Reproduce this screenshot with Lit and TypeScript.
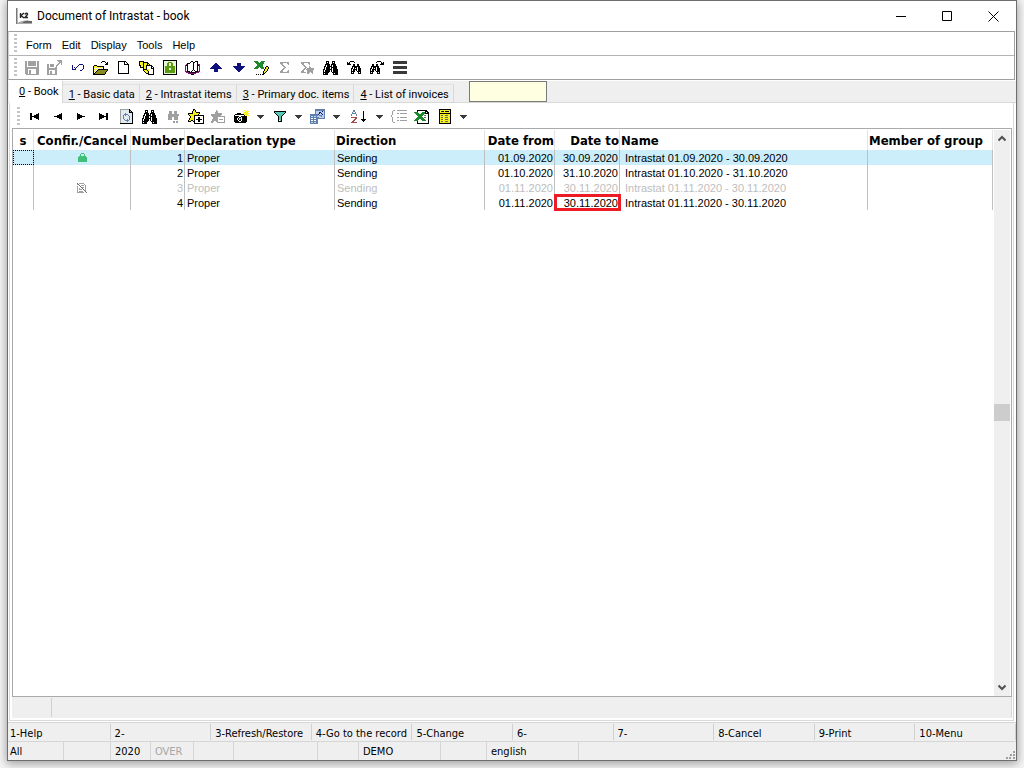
import { LitElement, html, svg, css, nothing } from "lit";
import { customElement, property } from "lit/decorators.js";
import { classMap } from "lit/directives/class-map.js";

const PALETTE: Record<string, string> = {
  k: "#000000", w: "#ffffff", g: "#a0a0a0", d: "#6a6a6a", y: "#f8f01c", o: "#8a8a1c",
  n: "#10107c", b: "#5f7fae", l: "#bcd0e8", G: "#5a9a10", L: "#e8f6d8", p: "#8a0f82",
  e: "#1c8a2c", r: "#a84848", t: "#58c8b8", s: "#e2ebf0", m: "#3fbf78", c: "#3a3a3a",
};

const BITMAPS: Record<string, string[]> = {
  save: [
    "ggwggggggggwgg", "ggwggggggggwgg", "ggwggggggggwgg", "ggwggggggggwgg", "ggwggggggggwgg",
    "ggwwwwwwwwwwgg", "gggggggggggggg", "gggggggggggggg", "gggwwwwwwwwggg", "gggwggwwwwwggg",
    "gggwggwwwwwggg", "gggwggwwwwwggg", "gggwggwwwwwggg", ".ggggggggggggg",
  ],
  saveAs: [
    "..........ggggg", "...........gggg", "............ggg", "...........gg.g", "ggwggggww.gg..g",
    "ggwggggwwgg....", "ggwggggwwg.....", "ggwwwwwwgg.....", "gggggggggg.....", "gggggggggg.....",
    "ggwwwwwwgg.....", "ggwggwwwgg.....", "ggwggwwwgg.....", "ggwggwwwgg.....", "gggggggggg.....",
  ],
  undo: [
    ".......nnnn.", "n.....n....n", "n....n.....n", "n.n.n......n", "n..n.......n",
    "nnnn......n.", "........nn..",
  ],
  open: [
    ".........kkk...", "........k...k.k", ".............kk", "............kkk", ".kkk...........",
    "kyyykkkkkkk....", "kywywywywyk....", "kwywywywywk....", "kywywkkkkkkkkkk", "kwywkoooooooook",
    "kywkoooooooook.", "kwkoooooooook..", "kkooooooooook..", "kkkkkkkkkkkk...",
  ],
  page: [
    "kkkkkkkk...", "kwwwwwkwk..", "kwwwwwkwwk.", "kwwwwwkkkkk", "kwwwwwwwwwk", "kwwwwwwwwwk",
    "kwwwwwwwwwk", "kwwwwwwwwwk", "kwwwwwwwwwk", "kwwwwwwwwwk", "kwwwwwwwwwk", "kwwwwwwwwwk", "kkkkkkkkkkk",
  ],
  pages: [
    "kkkkk..........", "kyyykkkkk......", "kyyykyyykk.....", "kyyykyyykyk....", "kkyykyykkkkkk..",
    ".kyykyykwwwwkk.", ".kkkkyykwwwwkwk", "....kyykwwwwkkk", "....kkkkyywwwwk", "....kyyykywwwwk",
    ".....kyyykwwwwk", "......kyykwwwwk", ".......kkkwwwwk", ".........kkkkkk",
  ],
  lock: [
    "kkkkkkkkkkkkkk", "kLLLLLLLLLLLLk", "kLLLLGGGGLLLLk", "kLLLGGLLGGLLLk", "kLLLGGLLGGLLLk", "kLLLGGLLGGLLLk",
    "kLGGGGGGGGGGLk", "kLGGGGGGGGGGLk", "kLGGGGLLGGGGLk", "kLGGGGLLGGGGLk", "kLGGGGGGGGGGLk", "kLGGGGGGGGGGLk",
    "kLGGGGGGGGGGLk", "kLLLLLLLLLLLLk", "kkkkkkkkkkkkkk",
  ],
  book: [
    "......kk..kkk..", ".....kwwkkwwk..", "..kkkwwwkwwwk..", ".pkwwwwwkwwwkpp", "pkkwwwwwkwwwkkp",
    "p.kwwwwwkwwwk.p", "p.kwwwwwkwwwk.p", "p.kwwwwwkwwwk.p", "p.kwwwwwkwwwk.p", "p.kwwwwkwkwwk.p",
    "ppkkkwkwwwkkkpp", ".pppkkkkkkkppp.", "...pppppppp....", "......kkk......",
  ],
  up: [".....nn.....", "....nnnn....", "...nnnnnn...", "..nnnnnnnn..", ".nnnnnnnnnn.", "nnnnnnnnnnnn", "....nnnn....", "....nnnn....", "....nnnn...."],
  down: ["....nnnn....", "....nnnn....", "....nnnn....", "nnnnnnnnnnnn", ".nnnnnnnnnn.", "..nnnnnnnn..", "...nnnnnn...", "....nnnn....", ".....nn....."],
  excelEdit: [
    "eeee...eeee.....", ".eeee.eeee......", "..eeeeeeee......", "...eeeeee.......", "...eeeeee.......",
    "..eeeeeee...kk..", ".eeee.eeee.kyyk.", "eeee...eee.kyyk.", "..........kyyk..", "..........kyyk..",
    ".........kyyk...", ".........kyk....", ".........kk.....", "..k.k.k.kk......",
  ],
  sigma: ["ggggggggg", "ggg....gg", ".gg.....g", "..gg.....", "...gg....", "....gg...", "...gg....", "..gg.....", ".gg.....g", "ggg....gg", "ggggggggg"],
  sigmaStar: [
    "ggggggggg....", "ggg....gg....", ".gg.....g....", "..gg.........", "...gg...g....", "....gg..gg...",
    "...gg.ggggggg", "..gg.gggggggg", ".gg...gggggg.", "ggg...gggggg.", "ggggg.ggg.gg.", "......gg...g.",
  ],
  find: [
    "...kkk...kkk...", "...kwk...kwk...", "...kkk...kkk...", "..kkkkk.kkkkk..", "..kwkkk.kwkkk..",
    ".kkwkkkkkwkkkk.", ".kwkkkkwkkkkkk.", ".kwkkkkwkwkkkk.", "kkwkkkkkkwkkkkk", "kwkkkkkwkwkkkkk",
    "kwkkkkk.kwkkkkk", "kkkkkk...kkkkkk", "kwkkk.....kwkkk", "kkkkk.....kkkkk",
  ],
  findPrev: [
    "...kkkk.......", "k.k....k......", "kkk...........", "kkkk..kk..kk..", "......kk..kk..", ".....kkkkkkkk.",
    ".....kwkkkwkk.", "....kkwkwkwkkk", "....kwkkkkwkkk", "....kwkkwkwkkk", "....kkkk..kkkk", "....kwk....kwk", "....kkk....kkk",
  ],
  findNext: [
    ".......kkkk...", "......k....k.k", "...........kkk", "..kk..kk..kkkk", "..kk..kk......", ".kkkkkkkk.....",
    ".kwkkkwkk.....", "kkwkwkwkkk....", "kwkkkkwkkk....", "kwkkwkwkkk....", "kkkk..kkkk....", "kwk....kwk....", "kkk....kkk....",
  ],
  menu: ["cccccccccccccc", "cccccccccccccc", "cccccccccccccc", "..............", "..............", "cccccccccccccc", "cccccccccccccc", "cccccccccccccc", "..............", "..............", "cccccccccccccc", "cccccccccccccc", "cccccccccccccc"],
  first: ["kk......k", "kk....kkk", "kk..kkkkk", "kkkkkkkkk", "kk..kkkkk", "kk....kkk", "kk......k"],
  prev: [".......k", ".....kkk", "...kkkkk", "kkkkkkkk", "...kkkkk", ".....kkk", ".......k"],
  next: ["k.......", "kkk.....", "kkkkk...", "kkkkkkkk", "kkkkk...", "kkk.....", "k......."],
  last: ["k......kk", "kkk....kk", "kkkkk..kk", "kkkkkkkkk", "kkkkk..kk", "kkk....kk", "k......kk"],
  refresh: [
    "gggggggggk...", "gsssssssskk..", "gsssssssskgk.", "gsssssssskkkk", "gssssbssssssk", "gsssbbbbssssk",
    "gssbsbssbsssk", "gssbsssssbssk", "gssbsssssbssk", "gssbsssssbssk", "gsssbssbsbssk", "gssssbbbbsssk",
    "gssssssbssssk", "gsssssssssssk", "kkkkkkkkkkkkk",
  ],
  findMore: [
    "..ggg..ggg..", "..ggg..ggg..", "..ggg..ggg..", ".ggggggggggg", ".ggggggggggg", ".gggggggggg.",
    ".gggg..gggg.", ".gggg..gggg.", ".gggg..gggg.", "............", "......gg.gg.", "......gg.gg.",
  ],
  starAdd: [
    ".....kk.........", ".....kyk........", "....kyyk........", "....kyyykkkk....", "kkkkkyyyyyyk....",
    "kyyyyyyyyyk.....", ".kyyyykkkkkkkkkk", "..kyyykwwwwwwwwk", "..kyyykwwwkkwwwk", ".kyyyykwwwkkwwwk",
    ".kyyyykwkkkkkkwk", "kyykkykwwwkkwwwk", "kkk..kkwwwkkwwwk", "......kwwwwwwwwk", "......kkkkkkkkkk",
  ],
  starRemove: [
    ".....g.........", ".....gg........", "....ggg........", "....ggggggg....", "ggggggggggg....",
    "gggggggggg.....", ".ggggggggggggg.", "..gggggwwwwwwg.", "..gggggwwwwwwg.", ".ggggggwggggwg.",
    ".ggggggwwwwwwg.", "ggg..ggwwwwwwg.", "gg....gggggggg.",
  ],
  camera: [
    "..........y..y.", ".........y.yy.y", "..........yyyy.", "...kkkk..yyyyyy", ".kkkkkkkkkyyyy.", "kwwwwwwwwwkyy.y",
    "kkkkkwwkkkkkk..", "kkkkwkkwkkkkk..", "kkkwkltwkkkkk..", "kkkwklkwkkkkk..", "kkkkwkkwkkkkk..", "kkkkkwwkkkkkk..", ".kkkkkkkkkkk...",
  ],
  filter: [
    "kkkkkkkkkkkk", "kttttttttttk", ".kttttttttk.", "..kttttttk..", "...kttttk...", "....kttk....",
    "....kttk....", "....kttk....", "....kttk....", "....kwtk....", "....kkkk....",
  ],
  tables: [
    ".....bbbbbbbbbb", ".....bbbbbbbbbb", ".....bllllllnlb", ".....blllnnlllb", ".....blllnlnllb", "bbbbbbbbnlllnlb",
    "bbbbbbbblbbbllb", "bllbllbllllbllb", "bbbbbbbbblllllb", "bwwbwwbbbbbbbbb", "bbbbbbbb.......", "bwwbwwbb.......",
    "bbbbbbbb.......", "bllbllbb.......", "bbbbbbbb.......",
  ],
  sort: [
    "..bb...........", "..bb........k..", ".b..b.......k..", ".bbbb.......k..", "b....b......k..", "b....b......k..",
    "............k..", "rrrrrr......k..", "....rr......k..", "...rr.....kkkkk", "..rr.......kkk.", ".rr.........k..", "rrrrrr.........",
  ],
  tree: [
    "..gg..gggggggggg", ".g..............", ".g..............", ".g....gg.ggggggg", ".g..............", "g...............",
    "g...............", ".g....gg.ggggggg", ".g..............", ".g..............", ".g....gg.ggggggg", ".g..............", "..gg............",
  ],
  excelSheet: [
    "...kkkkkkkkkk...", "...kwwwwwwwkkk..", "eeeewwwweeekwkk.", ".eeeewweeeekkkk.", "..eeeeeeeewwwwk.", "...eeeeeewddwwk.",
    "....eeeewwwwwwk.", "...eeeeeewddwwk.", "..eeeeeeeewwwwk.", ".eeeewweeeewwwk.", "eeeewwwweeeewwk.", "...kwwwwwwwwwwk.",
    "...kwwwwwwwwwwk.", "...kkkkkkkkkkkk.",
  ],
  list: [
    "kkkkkkkkkkkk", "kyyyyyyyyyyk", "kyckkykkkkyk", "kyyyyyyyyyyk", "kkkkkkkkkkkk", "kyyyyyyyyyyk", "kyddyydddyyk",
    "kyyyyyyyyyyk", "kyddyydddyyk", "kyyyyyyyyyyk", "kyddyydddyyk", "kyyyyyyyyyyk", "kyddyydddyyk", "kyyyyyyyyyyk", "kkkkkkkkkkkk",
  ],
  drop: ["ccccccc", ".ccccc.", "..ccc..", "...c..."],
  locked: ["...mmm...", "..m...m..", "..m...m..", ".mmmmmmm.", "mmmmmmmmm", "mmmmmmmmm", "mmmmmmmmm", "mmmmmmmmm", "mmmmmmmmm"],
  cancelled: [
    "d.ggggg...", "gd.....g..", ".wd.gggwg.", "g.wd....g.", "g..wdgg.g.", "g.g.wd..g.", "g.ggg.d.g.", "g......dg.", "g.gggg.wd.", "ggggggg.wd",
  ],
  grip: [".......gg", ".......gg", ".........", "....gg.gg", "....gg.gg", ".........", "gg.gg..gg", "gg.gg..gg"],
};

/** Draws a bitmap as runs of equal pixels. */
function glyph(name: string) {
  const rows = BITMAPS[name];
  const w = Math.max(...rows.map((r) => r.length));
  const paths: Record<string, string> = {};
  rows.forEach((row, y) => {
    for (let x = 0; x < row.length; ) {
      let end = x + 1;
      while (end < row.length && row[end] === row[x]) end++;
      if (row[x] !== ".") paths[row[x]] = (paths[row[x]] ?? "") + `M${x} ${y}h${end - x}v1h${x - end}z`;
      x = end;
    }
  });
  return html`<svg width=${w} height=${rows.length} viewBox="0 0 ${w} ${rows.length}" shape-rendering="crispEdges" aria-hidden="true">
    ${Object.entries(paths).map(([c, d]) => svg`<path d=${d} fill=${PALETTE[c]}></path>`)}
  </svg>`;
}

type Tool = [icon: string, label: string];

@customElement("tool-strip")
class ToolStrip extends LitElement {
  @property({ attribute: false }) tools: Tool[] = [];
  static styles = css`
    :host { display: flex; align-items: center; height: 100%; }
    button { width: 23px; height: 22px; padding: 0; border: 0; background: none; display: flex; align-items: center; justify-content: center; }
    button:hover { background: #e2effa; }
    .drop { width: 15px; }
    .sort { width: 28px; }
    svg { display: block; flex: none; }
  `;
  render() {
    return this.tools.map(([icon, label]) => html`<button class=${classMap({ drop: icon === "drop", sort: icon === "sort" })}
      aria-label=${label}>${glyph(icon)}</button>`);
  }
}

interface Row {
  num: number; from: string; to: string; icon?: string; state?: string; mark?: boolean;
}

const ROWS: Row[] = [
  { num: 1, from: "01.09.2020", to: "30.09.2020", icon: "locked", state: "selected" },
  { num: 2, from: "01.10.2020", to: "31.10.2020" },
  { num: 3, from: "01.11.2020", to: "30.11.2020", icon: "cancelled", state: "off" },
  { num: 4, from: "01.11.2020", to: "30.11.2020", mark: true },
];

@customElement("record-grid")
class RecordGrid extends LitElement {
  static styles = css`
    :host { display: flex; background: #fff; border: 1px solid #a9a9ae; padding: 1px 1px 0 0; box-sizing: border-box; min-height: 0; }
    .sheet { flex: 1; min-width: 0; }
    table { width: 100%; table-layout: fixed; border-collapse: separate; border-spacing: 0; font: 11px/13px "Liberation Sans", Arial, sans-serif; color: #000; }
    th, td { padding: 2px 2px 0; overflow: hidden; white-space: nowrap; text-align: left; height: 15px; box-sizing: border-box; }
    td { border-right: 1px solid #bfbfbf; }
    th { height: 20px; padding: 2px 1px 0; border-right: 1px solid #e3e3e3; font: bold 13px/18px "DejaVu Sans Condensed", "DejaVu Sans", sans-serif; }
    .s { width: 21px; } .conf { width: 97px; } .num { width: 54px; } .type { width: 150px; }
    .from { width: 70px; } .to { width: 65px; } .member { width: 125px; }
    th.s, th.conf { text-align: center; }
    .right { text-align: right; padding-right: 1px; padding-left: 0; }
    th.right { padding-right: 0; overflow: visible; }
    td.name { padding-left: 5px; }
    .selected td { background: #cbeefa; }
    .selected td:first-child { outline: 1px dotted #000; outline-offset: -1px; }
    .off td { color: #bdbdbd; }
    td.icon { padding: 0 2px; }
    td svg { display: block; margin: 0 auto; }
    td.mark { outline: 3px solid #ed1c24; outline-offset: -2px; }
    .scroll { width: 16px; margin-left: 1px; background: #efefef; display: flex; flex-direction: column; }
    .scroll button { height: 17px; padding: 0; border: 0; background: none; display: flex; align-items: center; justify-content: center; }
    .before { flex: 256; } .after { flex: 257; }
    .thumb { height: 17px; background: #cdcdcd; }
  `;
  render() {
    return html`<div class="sheet"><table>
        <thead><tr>
          <th class="s">s</th><th class="conf">Confir./Cancel</th><th class="num right">Number</th>
          <th class="type">Declaration type</th><th class="type">Direction</th><th class="from right">Date from</th>
          <th class="to right">Date to</th><th class="name">Name</th><th class="member">Member of group</th>
        </tr></thead>
        <tbody>${ROWS.map((r) => html`<tr class=${r.state ?? ""}>
          <td></td><td class="icon">${r.icon ? glyph(r.icon) : nothing}</td><td class="right">${r.num}</td>
          <td>Proper</td><td>Sending</td><td class="right">${r.from}</td>
          <td class="right ${r.mark ? "mark" : ""}">${r.to}</td>
          <td class="name">Intrastat ${r.from} - ${r.to}</td><td></td></tr>`)}</tbody>
      </table></div>
      <div class="scroll">
        <button aria-label="Scroll up"><svg width="8" height="7" viewBox="0 0 8 7"><path d="M.5 5.500 4 2 7.500 5.500" fill="none" stroke="#505050" stroke-width="2"/></svg></button>
        <div class="before"></div><div class="thumb"></div><div class="after"></div>
        <button aria-label="Scroll down"><svg width="8" height="7" viewBox="0 0 8 7"><path d="M.5 1.500 4 5 7.500 1.500" fill="none" stroke="#505050" stroke-width="2"/></svg></button>
      </div>`;
  }
}

const MAIN_TOOLS: Tool[] = [
  ["save", "Save"], ["saveAs", "Save as"], ["undo", "Undo"], ["open", "Open"], ["page", "New"], ["pages", "Copy"],
  ["lock", "Confirm"], ["book", "Book"], ["up", "Up"], ["down", "Down"], ["excelEdit", "Edit in Excel"], ["sigma", "Sum"],
  ["sigmaStar", "Sum marked"], ["find", "Find"], ["findPrev", "Find previous"], ["findNext", "Find next"], ["menu", "Menu"],
];
const GRID_TOOLS: Tool[] = [
  ["first", "First"], ["prev", "Previous"], ["next", "Next"], ["last", "Last"], ["refresh", "Refresh"], ["find", "Find"],
  ["findMore", "Find more"], ["starAdd", "Mark"], ["starRemove", "Unmark"], ["camera", "Snapshot"], ["drop", "Snapshot options"],
  ["filter", "Filter"], ["drop", "Filter options"], ["tables", "Columns"], ["drop", "Column options"], ["sort", "Sort"],
  ["drop", "Sort options"], ["tree", "Tree"], ["excelSheet", "Export to Excel"], ["list", "Layout"], ["drop", "Layout options"],
];
const TABS = ["Book", "Basic data", "Intrastat items", "Primary doc. items", "List of invoices"];
const KEYS = ["1-Help", "2-", "3-Refresh/Restore", "4-Go to the record", "5-Change", "6-", "7-", "8-Cancel", "9-Print", "10-Menu"];
const STATUS: [text: string, width: number][] = [
  ["All", 56], ["", 47], ["2020", 40], ["OVER", 43], ["", 40], ["", 84], ["", 41], ["DEMO", 82], ["", 46], ["english", 92],
];

@customElement("app-root")
class AppRoot extends LitElement {
  static styles = css`
    :host { display: flex; height: 100vh; padding: 0 7px 7px; box-sizing: border-box; background: #f6f6f6; overflow: hidden;
      font: 11px/15px "DejaVu Sans Condensed", "DejaVu Sans", sans-serif; color: #000; }
    * { box-sizing: border-box; }
    button { font: inherit; color: inherit; border: 0; padding: 0; background: none; white-space: nowrap; text-align: left; }
    .window { flex: 1; min-width: 0; display: flex; flex-direction: column; background: #fff; border: 1px solid #6e6e6e;
      box-shadow: 0 2px 9px 1px rgba(0, 0, 0, 0.35); }
    .title { height: 30px; display: flex; align-items: center; padding-left: 8px; }
    .logo { flex: none; }
    h1 { flex: 1; margin: 0 0 0 5px; font: 12px/16px Roboto, "Noto Sans", sans-serif; }
    .caption { width: 46px; height: 29px; display: flex; align-items: center; justify-content: center; }
    .bars { margin-right: 1px; border: 1px solid #a0a0a0; border-left-color: #d0d0d0; }
    .bar { display: flex; align-items: center; height: 23px; }
    .menu { height: 24px; border-bottom: 1px solid #b4b4b4; font: 11px/14px "Liberation Sans", Arial, sans-serif; }
    .menu button { margin-left: 9px; padding: 2px 1px 0 0; }
    .handle { width: 3px; height: 19px; margin-left: 5px; background: repeating-linear-gradient(#c4c4c4 0 2px, transparent 2px 4px); flex: none; }
    .handle + tool-strip { margin-left: 3px; }
    .tabs { margin-top: 1px; height: 22px; display: flex; align-items: flex-end; background: #efefef; border-bottom: 1px solid #d9d9d9; flex: none; }
    .tab { height: 18px; padding: 1px 4px 0 6px; border-right: 1px solid #d9d9d9; border-top: 1px solid #e2e2e2; font: 11px/15px Roboto, "DejaVu Sans Condensed", sans-serif; }
    .tab.active { height: 22px; margin: 0 0 -1px 1px; padding: 0 3px 1px 10px; background: #fff; border-top: 0; }
    .quick { align-self: flex-start; width: 78px; height: 21px; margin-left: 15px; border: 1px solid #7a7a7a; background: #ffffe1; font: inherit; outline: 0; }
    .panel { flex: 1; min-height: 0; display: flex; flex-direction: column; margin: 0 2px 0 1px; padding: 0 1px 2px 2px;
      border: 1px solid #d9d9d9; border-top: 0; }
    .panel .bar { height: 25px; flex: none; padding-top: 2px; }
    record-grid { flex: 1; }
    .info { height: 21px; background: #efefef; display: flex; padding: 1px 0; border-right: 1px solid #d9d9d9; flex: none; }
    .info span { width: 40px; border-right: 1px solid #d0d0d0; }
    .keys { display: flex; background: #efefef; margin-top: 1px; height: 20px; padding: 1px 0; border: solid #d6d6d6; border-width: 1px 0; flex: none; }
    .keys button { flex: 1 1 10px; min-width: 0; padding: 2px 0 0 4px; border-right: 1px solid #d0d0d0; }
    .keys button:first-child { flex-basis: 12px; padding-left: 2px; }
    .status { display: flex; background: #efefef; height: 18px; flex: none; }
    .status span { padding: 2px 0 0 4px; line-height: 16px; border-right: 1px solid #d6d6d6; flex: none; }
    .status span:first-child { padding-left: 2px; }
    .status .dim { color: #a6a6a6; }
    .status svg { margin: auto 1px 1px auto; }
  `;
  render() {
    return html`<div class="window">
      <header class="title">
        <svg class="logo" width="16" height="16" viewBox="0 0 16 16" aria-hidden="true">
          <path d="M0 0h1.500v16H0z" fill="#777"/><path d="M1 15c5-3 9-3 15-2v3H1z" fill="#aaa"/><path d="M7 14c3-2 6-1 9-1v2H7z" fill="#666"/>
          <path d="M4.500 5v5M8 5 5 7.500 8 10M9 6.500C9.500 4.500 12 5 11.500 6.500L9 9.500h3" fill="none" stroke="#222" stroke-width="1.400"/>
        </svg>
        <h1>Document of Intrastat - book</h1>
        <button class="caption" aria-label="Minimize"><svg width="10" height="10"><path d="M0 5h10v1H0z"/></svg></button>
        <button class="caption" aria-label="Maximize"><svg width="10" height="10"><path d="M.5.5h9v9h-9z" fill="none" stroke="#000"/></svg></button>
        <button class="caption" aria-label="Close"><svg width="11" height="11"><path d="m.5.5 10 10m0-10-10 10" stroke="#000"/></svg></button>
      </header>
      <div class="bars">
        <nav class="bar menu"><span class="handle"></span>${["Form", "Edit", "Display", "Tools", "Help"].map((m) => html`<button>${m}</button>`)}</nav>
        <div class="bar"><span class="handle"></span><tool-strip .tools=${MAIN_TOOLS}></tool-strip></div>
      </div>
      <div class="tabs" role="tablist">
        ${TABS.map((t, i) => html`<button role="tab" aria-selected=${i === 0 ? "true" : "false"} class=${classMap({ tab: true, active: i === 0 })}><u>${i}</u> - ${t}</button>`)}
        <input class="quick" aria-label="Quick search">
      </div>
      <main class="panel">
        <div class="bar"><span class="handle"></span><tool-strip .tools=${GRID_TOOLS}></tool-strip></div>
        <record-grid></record-grid>
        <div class="info"><span></span></div>
      </main>
      <div class="keys">${KEYS.map((k) => html`<button>${k}</button>`)}</div>
      <footer class="status">${STATUS.map(([t, w]) => html`<span class=${t === "OVER" ? "dim" : ""} style="width:${w}px">${t}</span>`)}${glyph("grip")}</footer>
    </div>`;
  }
}
